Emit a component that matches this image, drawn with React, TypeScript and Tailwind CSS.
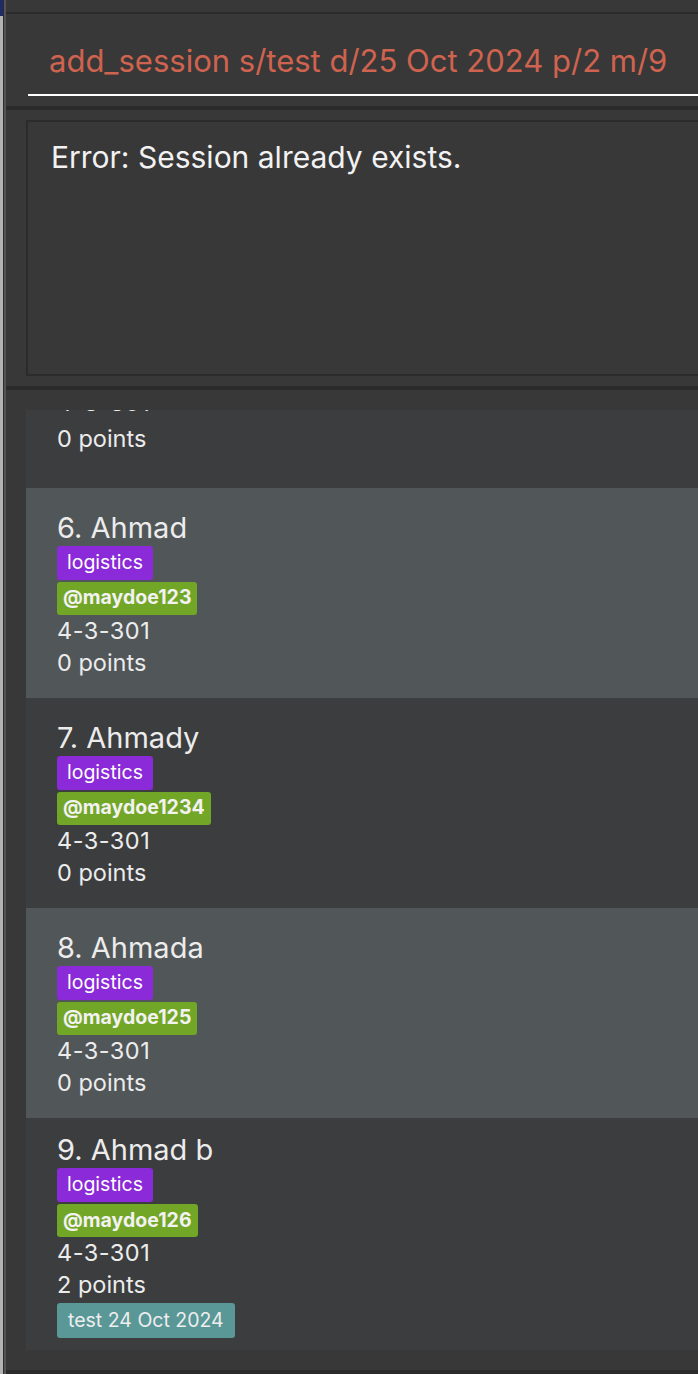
import React from 'react'

type Person = {
  index: number
  name: string
  tag: string
  telegram: string
  room: string
  points: number
  sessions?: string[]
}

const PEOPLE: Person[] = [
  { index: 6, name: 'Ahmad', tag: 'logistics', telegram: '@maydoe123', room: '4-3-301', points: 0 },
  { index: 7, name: 'Ahmady', tag: 'logistics', telegram: '@maydoe1234', room: '4-3-301', points: 0 },
  { index: 8, name: 'Ahmada', tag: 'logistics', telegram: '@maydoe125', room: '4-3-301', points: 0 },
  {
    index: 9,
    name: 'Ahmad b',
    tag: 'logistics',
    telegram: '@maydoe126',
    room: '4-3-301',
    points: 2,
    sessions: ['test 24 Oct 2024'],
  },
]

function PersonCard({ p, alt }: { p: Person; alt: boolean }) {
  return (
    <div
      className={
        'min-h-[210px] pt-[15px] pb-[12px] pl-[31px] flex flex-col justify-center items-start text-[#ececec] ' +
        (alt ? 'bg-[#515658]' : 'bg-[#3c3d3f]')
      }
    >
      <div className="text-[29px] leading-[34px] whitespace-nowrap">
        {p.index}. {p.name}
      </div>
      <div className="mt-px h-[34px] px-[10px] flex items-center bg-[#8a2ad8] rounded-[3px] text-[19.5px] text-white">
        {p.tag}
      </div>
      <div className="mt-[2px] h-[33px] px-[6px] flex items-center bg-[#72a626] rounded-[3px] text-[19.5px] font-bold text-[#f2f2f2]">
        {p.telegram}
      </div>
      <div className="text-[23.5px] leading-[32px] tracking-[0.5px]">{p.room}</div>
      <div className="text-[23.5px] leading-[32px]">{p.points} points</div>
      {p.sessions?.map(s => (
        <div
          key={s}
          className="mt-[2px] h-[35px] px-[11px] flex items-center bg-[#5a9797] rounded-[3px] text-[19.5px] text-[#eeeeee]"
        >
          {s}
        </div>
      ))}
    </div>
  )
}

export default function App() {
  return (
    <div
      className="w-[698px] h-[1374px] overflow-hidden flex bg-[#383838]"
      style={{ fontFamily: 'Inter, "Noto Sans", sans-serif' }}
    >
      {/* window edge */}
      <div className="w-[3px] bg-[#b3b3b3] flex flex-col">
        <div className="h-4 bg-[#1f2a6b]" />
      </div>
      <div className="w-px bg-[#2e2e2e]" />
      <div className="w-[2px] bg-[#545454]" />

      <div className="flex-1 min-w-0 flex flex-col">
        <div className="h-[12px]" />
        <div className="h-[2px] bg-[#2b2b2b]" />

        {/* command box */}
        <div className="h-[92px] pl-[22px]">
          <div className="h-[82px] border-b-2 border-white pl-[21px] pt-[28px] text-[31px] leading-[37px] text-[#d0634f] whitespace-nowrap">
            add_session s/test d/25 Oct 2024 p/2 m/9
          </div>
        </div>

        <div className="h-[4px] bg-[#2b2b2b]" />

        {/* result display */}
        <div className="h-[276px] pt-[10px] pl-[20px]">
          <div className="h-[256px] border-2 border-r-0 border-[#2b2b2b] pl-[23px] pt-[17px] text-[30px] leading-[36px] text-[#f2f2f2] whitespace-nowrap">
            Error: Session already exists.
          </div>
        </div>

        <div className="h-[4px] bg-[#2b2b2b]" />

        {/* person list, scrolled part way into card 5 */}
        <div className="h-[980px] pt-[20px] pl-[20px] pb-[20px]">
          <div className="h-[940px] overflow-hidden flex flex-col">
            <div className="h-[78px] shrink-0 overflow-hidden flex flex-col justify-end pb-[33px] pl-[31px] bg-[#3c3d3f] text-[#ececec]">
              <div className="text-[23.5px] leading-[32px] tracking-[0.5px] mb-[4px]">4-3-301</div>
              <div className="text-[23.5px] leading-[32px]">0 points</div>
            </div>
            {PEOPLE.map((p, i) => (
              <PersonCard key={p.index} p={p} alt={i % 2 === 0} />
            ))}
          </div>
        </div>

        <div className="h-[4px] bg-[#2b2b2b]" />
      </div>
    </div>
  )
}
